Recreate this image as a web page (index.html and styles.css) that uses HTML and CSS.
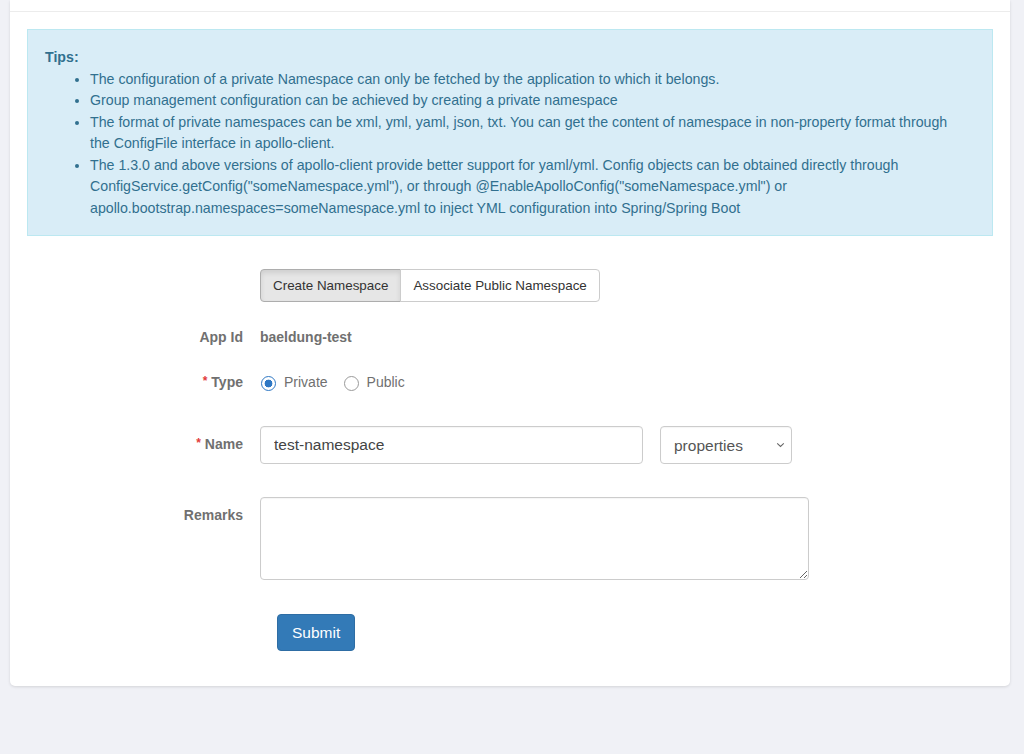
FILE: index.html
```html
<!DOCTYPE html>
<html lang="en">
<head>
<meta charset="utf-8">
<title>Create Namespace</title>
<link rel="stylesheet" href="styles.css">
</head>
<body>
<div class="panel">
  <div class="panel-header"></div>
  <div class="panel-body">
    <div class="alert">
      <strong class="tips-title">Tips:</strong>
      <ul class="tips-list">
        <li>The configuration of a private Namespace can only be fetched by the application to which it belongs.</li>
        <li>Group management configuration can be achieved by creating a private namespace</li>
        <li>The format of private namespaces can be xml, yml, yaml, json, txt. You can get the content of namespace in non-property format through the ConfigFile interface in apollo-client.</li>
        <li>The 1.3.0 and above versions of apollo-client provide better support for yaml/yml. Config objects can be obtained directly through ConfigService.getConfig("someNamespace.yml"), or through @EnableApolloConfig("someNamespace.yml") or apollo.bootstrap.namespaces=someNamespace.yml to inject YML configuration into Spring/Spring Boot</li>
      </ul>
    </div>

    <form class="ns-form">
      <div class="form-row row-tabs">
        <div class="label-col"></div>
        <div class="btn-group">
          <button type="button" class="btn btn-active">Create Namespace</button>
          <button type="button" class="btn">Associate Public Namespace</button>
        </div>
      </div>

      <div class="form-row row-text">
        <label class="label-col">App Id</label>
        <div class="static-value">baeldung-test</div>
      </div>

      <div class="form-row row-type">
        <label class="label-col"><span class="req">*</span>Type</label>
        <div class="radios">
          <label class="radio-item"><input type="radio" name="type" checked> Private</label>
          <label class="radio-item"><input type="radio" name="type"> Public</label>
        </div>
      </div>

      <div class="form-row row-name">
        <label class="label-col label-name"><span class="req">*</span>Name</label>
        <div class="name-controls">
          <input class="text-input" type="text" value="test-namespace">
          <div class="select-wrap">
            <select class="select-input">
              <option>properties</option>
              <option>xml</option>
              <option>json</option>
              <option>yml</option>
              <option>yaml</option>
              <option>txt</option>
            </select>
            <svg class="chevron" width="9" height="6" viewBox="0 0 9 6"><path d="M1.2 1.4 L4.5 4.4 L7.8 1.4" fill="none" stroke="#666" stroke-width="1.1"/></svg>
          </div>
        </div>
      </div>

      <div class="form-row row-remarks">
        <label class="label-col label-top">Remarks</label>
        <textarea class="textarea-input"></textarea>
      </div>

      <div class="form-row row-submit">
        <div class="label-col"></div>
        <button type="button" class="btn-primary">Submit</button>
      </div>
    </form>
  </div>
</div>
</body>
</html>
```
FILE: styles.css
```css
* { box-sizing: border-box; }

html, body {
  margin: 0;
  padding: 0;
}

body {
  background: #f0f1f6;
  font-family: "Liberation Sans", Arial, Helvetica, sans-serif;
  font-size: 14px;
  color: #333;
  height: 754px;
  overflow: hidden;
}

.panel {
  margin: 0 14px 0 10px;
  background: #fff;
  border-radius: 0 0 5px 5px;
  box-shadow: 0 1px 3px rgba(0, 0, 0, 0.12);
}

.panel-header {
  height: 12px;
  border-bottom: 1px solid #ececec;
}

.panel-body {
  padding: 17px 17px 35px 17px;
}

.alert {
  background: #d9edf7;
  border: 1px solid #bce8f1;
  color: #31708f;
  padding: 17px 25px 16px 17px;
  font-size: 14.2px;
  line-height: 21.5px;
}

.tips-title {
  display: block;
  font-weight: bold;
}

.tips-list {
  margin: 0;
  padding-left: 45px;
}

.ns-form {
  margin-top: 33px;
}

.form-row {
  display: grid;
  grid-template-columns: 216px 1fr;
  column-gap: 17px;
  align-items: center;
}

.label-col {
  text-align: right;
  font-weight: bold;
  color: #707070;
  line-height: 20px;
}

.req {
  color: #e23b3b;
  font-weight: bold;
  margin-right: 4px;
  font-size: 12px;
  vertical-align: 2px;
}

.row-tabs { margin-bottom: 25px; }
.row-text { margin-bottom: 24px; }
.row-type { margin-bottom: 34px; }
.row-name { margin-bottom: 33px; }
.row-remarks { margin-bottom: 34px; align-items: start; }

.label-name { margin-top: -3px; }
.label-top { padding-top: 8px; }

.btn-group {
  display: flex;
}

.btn {
  font-family: inherit;
  font-size: 13.4px;
  height: 33px;
  padding: 0 12px;
  background: #fff;
  border: 1px solid #ccc;
  color: #333;
  margin: 0;
}

.btn:first-child {
  border-radius: 4px 0 0 4px;
}

.btn:last-child {
  border-radius: 0 4px 4px 0;
  margin-left: -1px;
}

.btn-active {
  background: #e6e6e6;
  border-color: #adadad;
  box-shadow: inset 0 3px 5px rgba(0, 0, 0, 0.1);
}

.static-value {
  font-weight: bold;
  color: #707070;
  line-height: 20px;
}

.radios {
  display: flex;
  gap: 15px;
  line-height: 20px;
}

.radio-item {
  display: flex;
  align-items: center;
  color: #707070;
  font-size: 14px;
}

.radio-item input {
  appearance: none;
  -webkit-appearance: none;
  width: 15px;
  height: 15px;
  margin: 3px 8px 0 1px;
  border-radius: 50%;
  border: 1px solid #9a9a9a;
  background: #fff;
}

.radio-item input:checked {
  border: 1.5px solid #2f78c4;
  background: radial-gradient(circle, #2f78c4 0 3.6px, #fff 4.2px);
}

.name-controls {
  display: flex;
  gap: 17px;
}

.text-input,
.select-input,
.textarea-input {
  font-family: inherit;
  font-size: 15.5px;
  color: #555;
  border: 1px solid #ccc;
  border-radius: 4px;
  background: #fff;
  box-shadow: inset 0 1px 1px rgba(0, 0, 0, 0.04);
}

.text-input {
  width: 383px;
  height: 38px;
  padding: 0 13px;
  color: #444;
}

.select-wrap {
  position: relative;
  width: 132px;
  height: 38px;
}

.select-input {
  appearance: none;
  -webkit-appearance: none;
  width: 100%;
  height: 100%;
  padding: 0 13px;
}

.chevron {
  position: absolute;
  right: 7px;
  top: 16px;
  pointer-events: none;
}

.textarea-input {
  width: 549px;
  height: 83px;
  resize: both;
  padding: 6px 12px;
}

.btn-primary {
  justify-self: start;
  margin-left: 17px;
  height: 37px;
  padding: 0 14px;
  font-family: inherit;
  font-size: 15.5px;
  color: #fff;
  background: #337ab7;
  border: 1px solid #2e6da4;
  border-radius: 4px;
}
```
